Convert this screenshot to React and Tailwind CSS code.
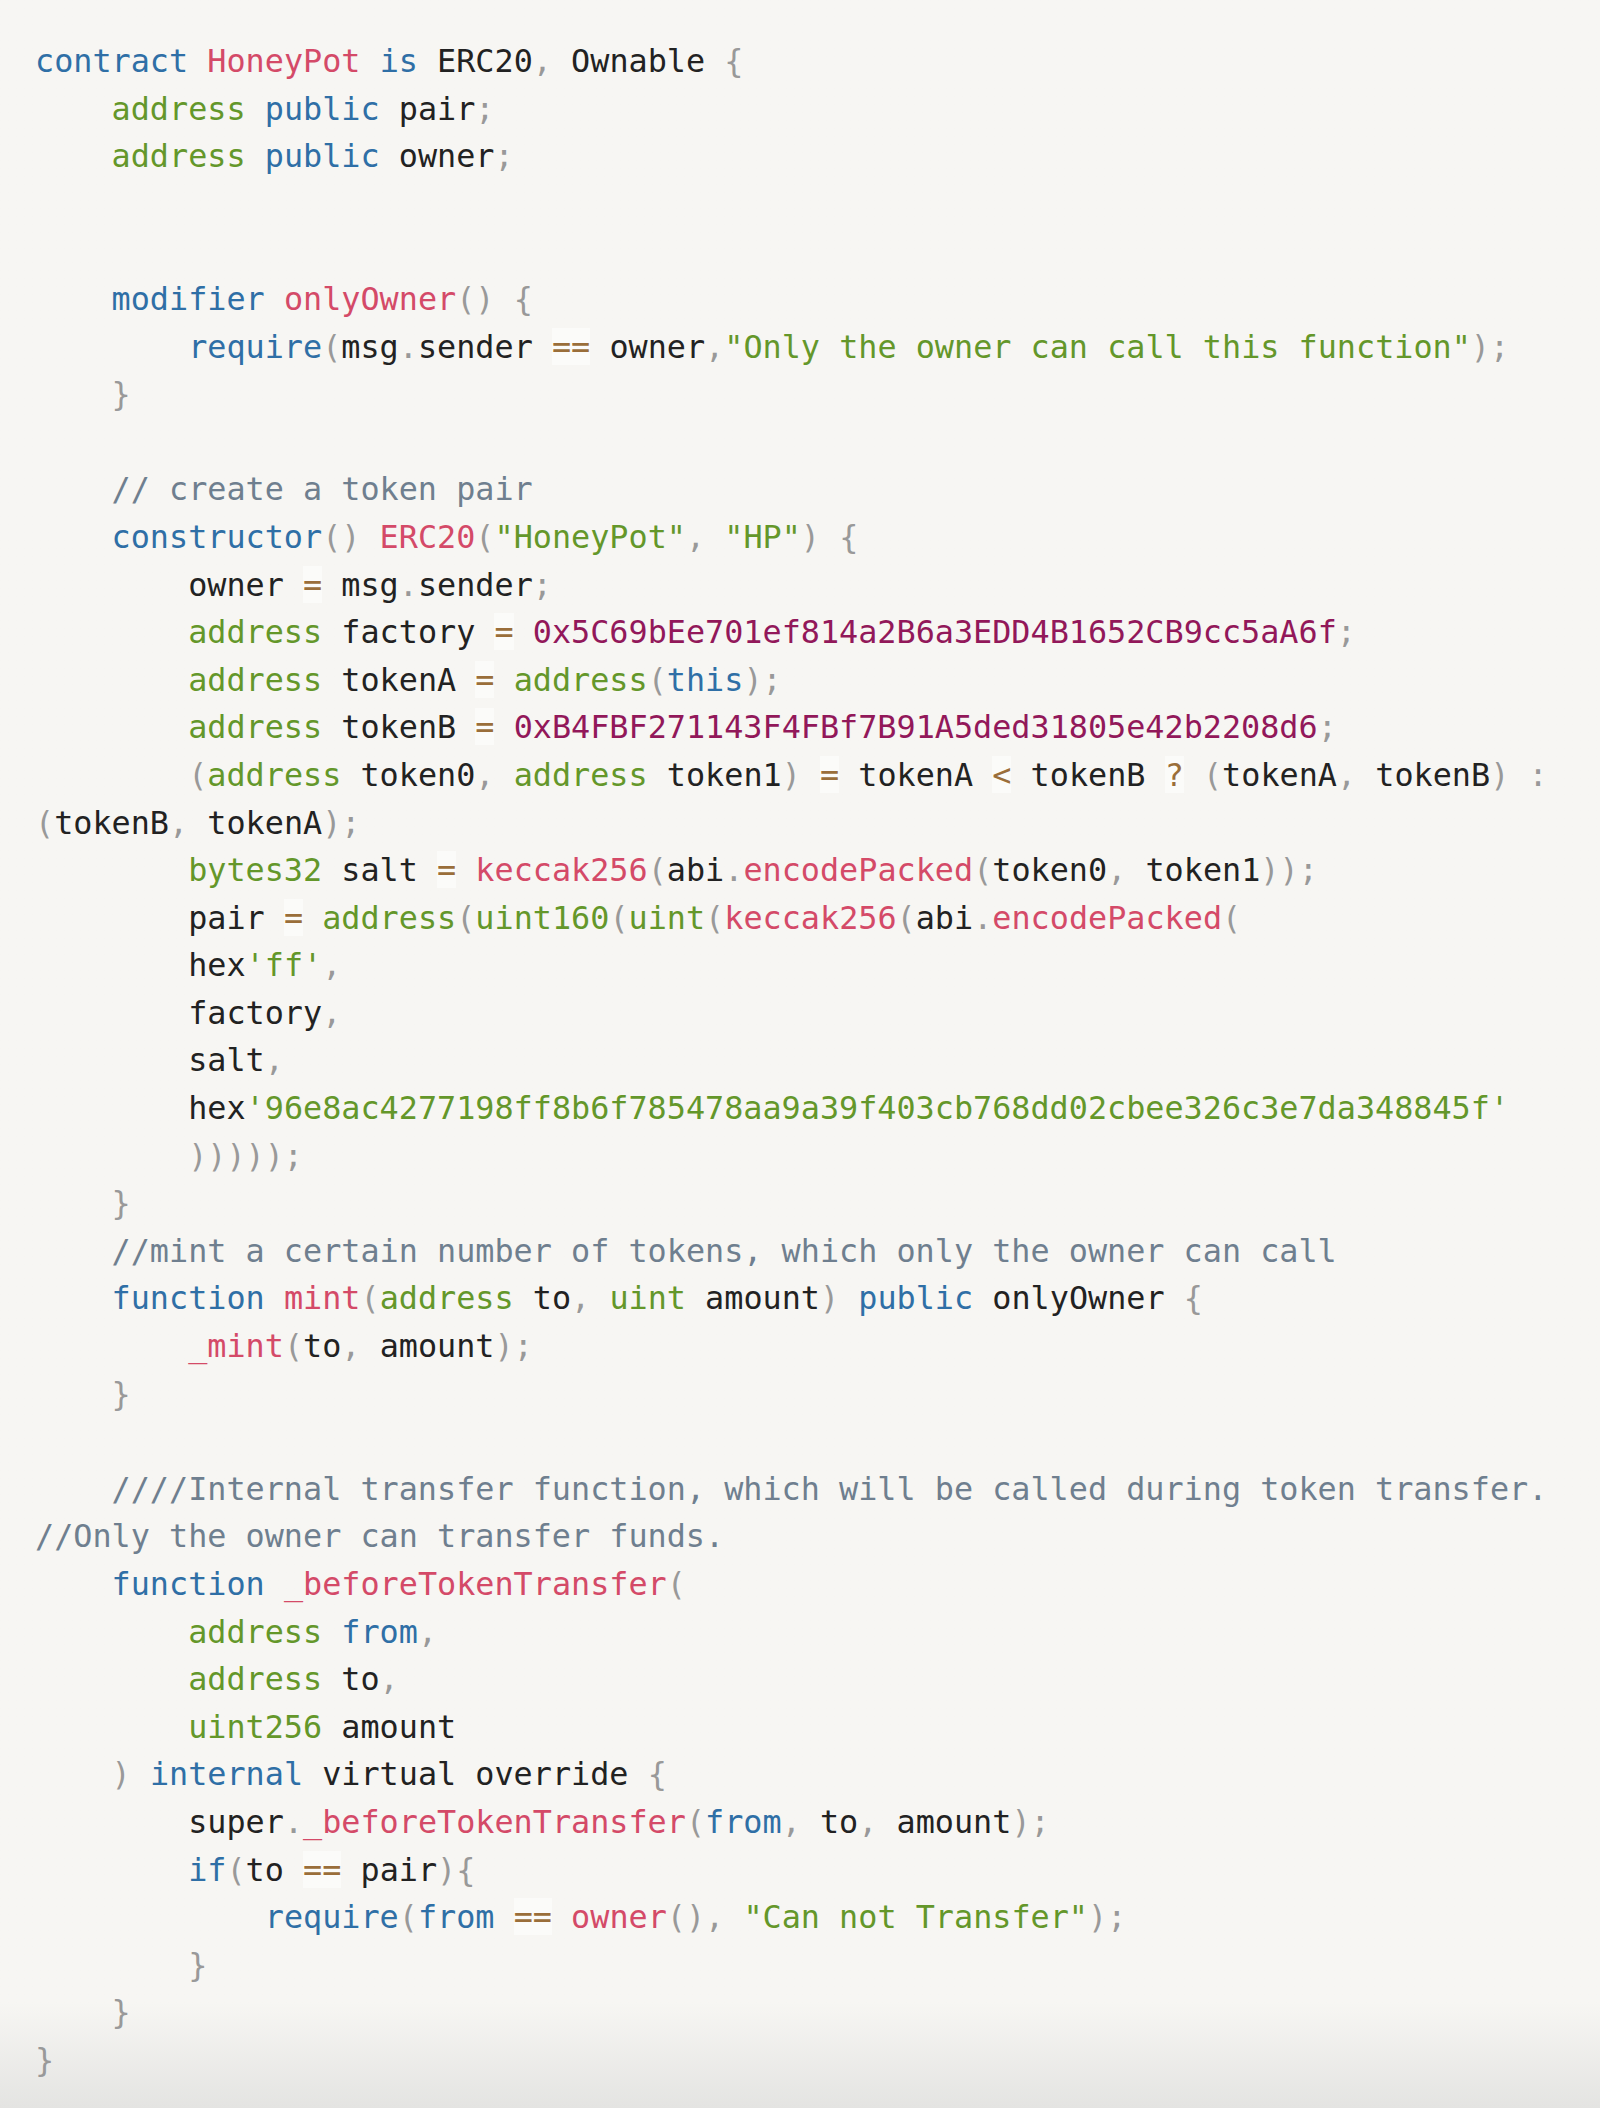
const TONE = {
  k: "text-[#2f6fa6]",
  t: "text-[#64972a]",
  f: "text-[#d44a68]",
  n: "text-[#92185a]",
  s: "text-[#64972a]",
  c: "text-[#6f7f8f]",
  p: "text-[#999999]",
  o: "text-[#9a6e3a] bg-white/50",
};

// each line: list of [tone, text]; plain text uses ""
const LINES = [
  [["k", "contract"], ["", " "], ["f", "HoneyPot"], ["", " "], ["k", "is"], ["", " ERC20"], ["p", ","], ["", " Ownable "], ["p", "{"]],
  [["", "    "], ["t", "address"], ["", " "], ["k", "public"], ["", " pair"], ["p", ";"]],
  [["", "    "], ["t", "address"], ["", " "], ["k", "public"], ["", " owner"], ["p", ";"]],
  [],
  [],
  [["", "    "], ["k", "modifier"], ["", " "], ["f", "onlyOwner"], ["p", "()"], ["", " "], ["p", "{"]],
  [["", "        "], ["k", "require"], ["p", "("], ["", "msg"], ["p", "."], ["", "sender "], ["o", "=="], ["", " owner"], ["p", ","], ["s", "\"Only the owner can call this function\""], ["p", ");"]],
  [["", "    "], ["p", "}"]],
  [],
  [["", "    "], ["c", "// create a token pair"]],
  [["", "    "], ["k", "constructor"], ["p", "()"], ["", " "], ["f", "ERC20"], ["p", "("], ["s", "\"HoneyPot\""], ["p", ","], ["", " "], ["s", "\"HP\""], ["p", ")"], ["", " "], ["p", "{"]],
  [["", "        owner "], ["o", "="], ["", " msg"], ["p", "."], ["", "sender"], ["p", ";"]],
  [["", "        "], ["t", "address"], ["", " factory "], ["o", "="], ["", " "], ["n", "0x5C69bEe701ef814a2B6a3EDD4B1652CB9cc5aA6f"], ["p", ";"]],
  [["", "        "], ["t", "address"], ["", " tokenA "], ["o", "="], ["", " "], ["t", "address"], ["p", "("], ["k", "this"], ["p", ");"]],
  [["", "        "], ["t", "address"], ["", " tokenB "], ["o", "="], ["", " "], ["n", "0xB4FBF271143F4FBf7B91A5ded31805e42b2208d6"], ["p", ";"]],
  [["", "        "], ["p", "("], ["t", "address"], ["", " token0"], ["p", ","], ["", " "], ["t", "address"], ["", " token1"], ["p", ")"], ["", " "], ["o", "="], ["", " tokenA "], ["o", "<"], ["", " tokenB "], ["o", "?"], ["", " "], ["p", "("], ["", "tokenA"], ["p", ","], ["", " tokenB"], ["p", ")"], ["", " "], ["p", ":"], ["", " "], ["p", "("], ["", "tokenB"], ["p", ","], ["", " tokenA"], ["p", ");"]],
  [["", "        "], ["t", "bytes32"], ["", " salt "], ["o", "="], ["", " "], ["f", "keccak256"], ["p", "("], ["", "abi"], ["p", "."], ["f", "encodePacked"], ["p", "("], ["", "token0"], ["p", ","], ["", " token1"], ["p", "));"]],
  [["", "        pair "], ["o", "="], ["", " "], ["t", "address"], ["p", "("], ["t", "uint160"], ["p", "("], ["t", "uint"], ["p", "("], ["f", "keccak256"], ["p", "("], ["", "abi"], ["p", "."], ["f", "encodePacked"], ["p", "("]],
  [["", "        hex"], ["s", "'ff'"], ["p", ","]],
  [["", "        factory"], ["p", ","]],
  [["", "        salt"], ["p", ","]],
  [["", "        hex"], ["s", "'96e8ac4277198ff8b6f785478aa9a39f403cb768dd02cbee326c3e7da348845f'"]],
  [["", "        "], ["p", ")))));"]],
  [["", "    "], ["p", "}"]],
  [["", "    "], ["c", "//mint a certain number of tokens, which only the owner can call"]],
  [["", "    "], ["k", "function"], ["", " "], ["f", "mint"], ["p", "("], ["t", "address"], ["", " to"], ["p", ","], ["", " "], ["t", "uint"], ["", " amount"], ["p", ")"], ["", " "], ["k", "public"], ["", " onlyOwner "], ["p", "{"]],
  [["", "        "], ["f", "_mint"], ["p", "("], ["", "to"], ["p", ","], ["", " amount"], ["p", ");"]],
  [["", "    "], ["p", "}"]],
  [],
  [["", "    "], ["c", "////Internal transfer function, which will be called during token transfer. //Only the owner can transfer funds."]],
  [["", "    "], ["k", "function"], ["", " "], ["f", "_beforeTokenTransfer"], ["p", "("]],
  [["", "        "], ["t", "address"], ["", " "], ["k", "from"], ["p", ","]],
  [["", "        "], ["t", "address"], ["", " to"], ["p", ","]],
  [["", "        "], ["t", "uint256"], ["", " amount"]],
  [["", "    "], ["p", ")"], ["", " "], ["k", "internal"], ["", " virtual override "], ["p", "{"]],
  [["", "        super"], ["p", "."], ["f", "_beforeTokenTransfer"], ["p", "("], ["k", "from"], ["p", ","], ["", " to"], ["p", ","], ["", " amount"], ["p", ");"]],
  [["", "        "], ["k", "if"], ["p", "("], ["", "to "], ["o", "=="], ["", " pair"], ["p", "){"]],
  [["", "            "], ["k", "require"], ["p", "("], ["k", "from"], ["", " "], ["o", "=="], ["", " "], ["f", "owner"], ["p", "(),"], ["", " "], ["s", "\"Can not Transfer\""], ["p", ");"]],
  [["", "        "], ["p", "}"]],
  [["", "    "], ["p", "}"]],
  [["p", "}"]],
];

export default function App() {
  return (
    <div className="min-h-[2108px] w-full bg-linear-to-b from-[#f7f6f3] from-95% to-[#e4e4e2]">
      <pre className="m-0 px-[35px] pt-[37px] whitespace-pre-wrap font-['DejaVu_Sans_Mono',monospace] text-[31.8px] leading-[47.6px] text-[#222222]">
        {LINES.map((line, i) => (
          <span key={i}>
            {line.map(([tone, text], j) =>
              tone ? (
                <span key={j} className={TONE[tone]}>
                  {text}
                </span>
              ) : (
                text
              )
            )}
            {"\n"}
          </span>
        ))}
      </pre>
    </div>
  );
}
